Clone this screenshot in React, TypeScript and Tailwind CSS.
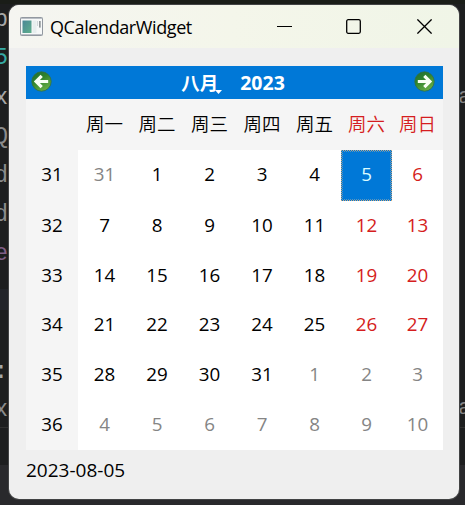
import React from "react";

type Fragment = { text: string; place: string };

const leftCode: Fragment[] = [
  { text: "p", place: "top-[4px] text-[#a7a7a7]" },
  { text: "5", place: "top-[42px] text-[#35aaa5]" },
  { text: "x", place: "top-[82px] text-[#a7a7a7]" },
  { text: "Q", place: "top-[121px] text-[#8b8b8b]" },
  { text: "d", place: "top-[160px] text-[#8b8b8b]" },
  { text: "d", place: "top-[199px] text-[#8b8b8b]" },
  { text: "e", place: "top-[238px] text-[#805f87]" },
  { text: ":", place: "top-[356px] text-[#a7a7a7]" },
  { text: "x", place: "top-[394px] text-[#8b8b8b]" },
];

const weekdays = ["周一", "周二", "周三", "周四", "周五", "周六", "周日"];

const weeks = [
  { week: 31, days: [31, 1, 2, 3, 4, 5, 6] },
  { week: 32, days: [7, 8, 9, 10, 11, 12, 13] },
  { week: 33, days: [14, 15, 16, 17, 18, 19, 20] },
  { week: 34, days: [21, 22, 23, 24, 25, 26, 27] },
  { week: 35, days: [28, 29, 30, 31, 1, 2, 3] },
  { week: 36, days: [4, 5, 6, 7, 8, 9, 10] },
];

const columns = "grid grid-cols-[52px_53px_52px_53px_52px_53px_51px_51px]";

function ArrowButton({ next = false }: { next?: boolean }) {
  const id = next ? "green-next" : "green-prev";
  return (
    <svg width="21" height="21" viewBox="0 0 21 21">
      <defs>
        <linearGradient id={id} x1="0" y1="0" x2="0.6" y2="1">
          <stop offset="0" stopColor="#1f6a35" />
          <stop offset="0.45" stopColor="#2f832d" />
          <stop offset="1" stopColor="#68ad43" />
        </linearGradient>
      </defs>
      <circle cx="10.5" cy="10.5" r="9.7" fill={`url(#${id})`} stroke="#33713d" strokeWidth="0.8" />
      <path d={next ? "M3.8 10.5H15M10.3 4.9l5.6 5.6-5.6 5.6" : "M17.2 10.5H6M10.7 4.9l-5.6 5.6 5.6 5.6"} fill="none" stroke="#f8fff3" strokeWidth="3.2" />
    </svg>
  );
}

function AppIcon() {
  return (
    <svg width="23" height="19" viewBox="0 0 23 19">
      <defs>
        <linearGradient id="pane" x1="0" y1="0" x2="1" y2="1">
          <stop offset="0" stopColor="#4b8797" />
          <stop offset="1" stopColor="#5eaf8b" />
        </linearGradient>
      </defs>
      <rect x="0.5" y="0.5" width="22" height="18" rx="0.8" fill="#f6f8f8" stroke="#9298a0" />
      <path d="M1 1.5h21" stroke="#b9bec5" />
      <rect x="2.5" y="3.5" width="9" height="12.5" fill="url(#pane)" />
      <rect x="12.5" y="3.5" width="4" height="12.5" fill="#e7eeee" />
      <path d="M17.5 4v5M20 4v7" stroke="#d1d8da" />
      <path d="M19.9 4v6.5" stroke="#596065" />
      <path d="M1 17.5h21" stroke="#b9bec5" />
    </svg>
  );
}

function TitleBar() {
  return (
    <header className="flex h-[43px] shrink-0 items-center bg-gradient-to-r from-[#f5f5f1] via-[#f4f6ea] to-[#f0f5e7] pl-[11px] pr-[27px]">
      <AppIcon />
      <h1 className="ml-[7px] w-[150px] whitespace-nowrap text-[18px] leading-6 tracking-[-0.4px]">QCalendarWidget</h1>
      <div className="ml-auto flex items-center text-black">
        <svg width="15" height="15" viewBox="0 0 15 15"><path d="M0 7.5h15" stroke="currentColor" strokeWidth="1.1" /></svg>
        <svg width="15" height="15" viewBox="0 0 15 15" className="ml-[54px]"><rect x="0.7" y="0.7" width="13.6" height="13.6" rx="1.5" fill="none" stroke="currentColor" strokeWidth="1.3" /></svg>
        <svg width="15" height="15" viewBox="0 0 15 15" className="ml-[56px]"><path d="m.4.4 14.2 14.2M14.6.4.4 14.6" stroke="currentColor" strokeWidth="1.3" /></svg>
      </div>
    </header>
  );
}

function Day({ day, row, column }: { day: number; row: number; column: number }) {
  const outside = (row === 0 && day > 20) || (row > 3 && day < 15);
  if (row === 0 && day === 5) {
    return (
      <div className="relative flex items-center justify-center bg-[#0078d7] pb-[3px] text-[#dcfcff]">
        5
        <svg width="51" height="51" viewBox="0 0 51 51" shapeRendering="crispEdges" className="absolute inset-0">
          <path d="M0 .5h51M50.5 0v51M0 50.5h51M.5 0v51" fill="none" stroke="#c9a880" strokeDasharray="1 1" />
          <path d="M1 1.5h49M49.5 1v49M1 49.5h49M1.5 1v49" fill="none" stroke="#5c96bd" strokeDasharray="1 1" />
        </svg>
      </div>
    );
  }
  const color = outside ? "text-[#858585]" : column > 4 ? "text-[#d51d20]" : "text-black";
  return <div className={`flex items-center justify-center bg-white pb-[3px] ${color}`}>{day}</div>;
}

export default function App() {
  return (
    <div className="relative h-[505px] w-[465px] overflow-hidden bg-[#1d1e1f] px-[9px] pt-[5px] font-['Open_Sans','Noto_Sans_CJK_SC',sans-serif]">
      <div className="absolute inset-x-0 top-0 h-1 bg-[#1a1d18]" />
      <div className="absolute bottom-0 left-0 h-10 w-full bg-[#29292c]" />
      <div className="absolute left-0 top-[289px] h-[21px] w-2 bg-[#222429]" />
      <div className="absolute left-0 top-[427px] h-px w-full bg-[#303030]" />
      {leftCode.map((item, index) => (
        <span key={index} className={`absolute right-[457px] font-['Liberation_Mono',monospace] text-[23px] leading-8 ${item.place}`}>{item.text}</span>
      ))}
      {["top-[82px]", "top-[393px]"].map((place) => (
        <span key={place} className={`absolute left-[458px] font-['Liberation_Mono',monospace] text-[22px] leading-8 text-[#858585] ${place}`}>a</span>
      ))}
      <main className="relative flex h-[494px] w-[450px] flex-col overflow-hidden rounded-[10px] bg-[#efefef] text-black shadow-[0_0_0_1px_#424344]">
        <TitleBar />
        <section className="mx-[17px] mt-[18px] w-[417px]">
          <nav className="flex h-[33px] items-center justify-between bg-[#0078d7] pl-[5px] pr-[8px] text-white">
            <div className="-mt-[3px]"><ArrowButton /></div>
            <div className="flex h-full items-center text-[19.5px] font-bold leading-6">
              <span className="relative text-[18.5px]">
                八月
                <svg width="7" height="4" viewBox="0 0 7 4" className="absolute -right-[4px] bottom-px"><path d="M0 0h7L3.5 4Z" fill="currentColor" /></svg>
              </span>
              <span className="ml-[22px]">2023</span>
            </div>
            <div className="-mt-[3px]"><ArrowButton next /></div>
          </nav>
          <div className={`${columns} h-[51px] bg-[#f5f5f5] text-[18.5px]`}>
            <span />
            {weekdays.map((day, column) => (
              <div key={day} className={`flex items-center justify-center pb-[2px] font-[350] ${column > 4 ? "text-[#d51d20]" : "text-black"}`}>{day}</div>
            ))}
          </div>
          <div className="grid grid-rows-[51px_50px_50px_49px_50px_50px] text-[18.8px] leading-6">
            {weeks.map(({ week, days }, row) => (
              <div key={week} className={columns}>
                <div className="flex items-center justify-center bg-[#f5f5f5] pb-[3px]">{week}</div>
                {days.map((day, column) => <Day key={column} day={day} row={row} column={column} />)}
              </div>
            ))}
          </div>
        </section>
        <p className="ml-[17px] mt-[8px] text-[19px] leading-6">2023-08-05</p>
      </main>
    </div>
  );
}
